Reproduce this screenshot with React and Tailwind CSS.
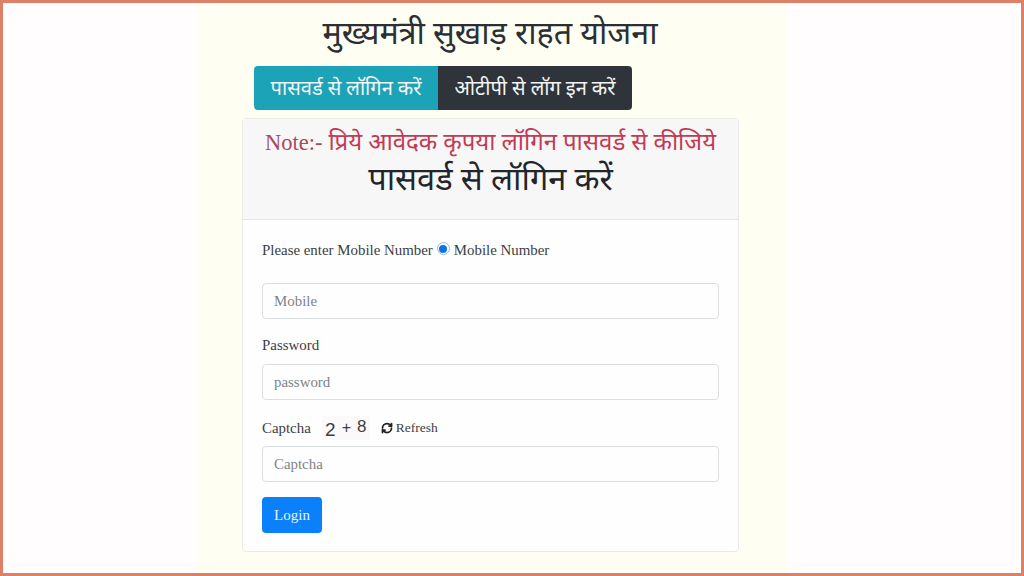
import { RefreshCw } from 'lucide-react'

function Field({ placeholder }) {
  return (
    <div className="flex h-[36px] w-[457px] items-center rounded border border-[#dcdfe2] bg-[#fefefe] px-[11px] text-[14.9px] text-[#7d8388]">
      {placeholder}
    </div>
  )
}

export default function App() {
  return (
    <div className="h-[576px] w-[1024px] overflow-hidden border-[3px] border-[#dc8068] bg-[#fffdfd] font-['Liberation_Serif','Noto_Sans',serif]">
      <div className="ml-[194px] flex h-full w-[590px] flex-col bg-[#fefef3]">
        <h1 className="mt-[8px] h-[44px] pr-[4px] text-center text-[32.3px] leading-[44px] text-[#2b2f33]">
          मुख्यमंत्री सुखाड़ राहत योजना
        </h1>
        <div className="ml-[57px] mt-[11px] flex h-[44px] w-[378px] overflow-hidden rounded text-[20.1px] text-[#f1f5f6]">
          <div className="flex w-[184px] items-center justify-center bg-[#1ca3b8]">पासवर्ड से लॉगिन करें</div>
          <div className="flex w-[194px] items-center justify-center bg-[#2f343b]">ओटीपी से लॉग इन करें</div>
        </div>
        <div className="ml-[45px] mt-[8px] w-[497px] rounded border border-[#ebebe6] bg-[#fefefe]">
          <div className="flex h-[101px] flex-col items-center border-b border-[#e6e6e6] bg-[#f7f7f7] pt-[8px]">
            <p className="h-[31px] text-[24px] leading-[31px] text-[#c13b55]">
              <span className="text-[22.5px] text-[#a8495c]">Note:-</span> प्रिये आवेदक कृपया लॉगिन पासवर्ड से कीजिये
            </p>
            <h2 className="text-[32.6px] leading-[42px] text-[#22262a]">पासवर्ड से लॉगिन करें</h2>
          </div>
          <div className="px-[19px] pb-[18px] pt-[20px] text-[14.9px] text-[#3a3f44]">
            <div className="flex h-[20px] items-center">
              <span>Please enter Mobile Number</span>
              <span className="mx-[4px] mb-[3px] flex h-[13px] w-[13px] items-center justify-center rounded-full border border-[#8fbdec] bg-white">
                <span className="h-[8px] w-[8px] rounded-full bg-[#0b74de]" />
              </span>
              <span>Mobile Number</span>
            </div>
            <div className="mt-[23px]">
              <Field placeholder="Mobile" />
            </div>
            <div className="mt-[16px] h-[21px] leading-[21px]">Password</div>
            <div className="mt-[8px]">
              <Field placeholder="password" />
            </div>
            <div className="mt-[16px] flex h-[24px] items-center">
              <span>Captcha</span>
              <span className="ml-[11px] flex h-[24px] w-[48px] items-center justify-center gap-[6px] bg-[#fbf9f9] font-['Liberation_Sans',sans-serif] text-[19px] leading-none text-[#3b3f43]">
                <span className="mt-[3px]">2</span>
                <span className="text-[16px]">+</span>
                <span className="mb-[4px] text-[17px]">8</span>
              </span>
              <RefreshCw className="ml-[11px] h-[12px] w-[12px] text-[#222]" strokeWidth={3.5} />
              <span className="ml-[3px] mt-[1px] text-[13.5px]">Refresh</span>
            </div>
            <div className="mt-[6px]">
              <Field placeholder="Captcha" />
            </div>
            <div className="mt-[15px] flex h-[36px] w-[60px] items-center justify-center rounded bg-[#0a80fb] text-[15px] text-[#e6f5ff]">
              Login
            </div>
          </div>
        </div>
      </div>
    </div>
  )
}
